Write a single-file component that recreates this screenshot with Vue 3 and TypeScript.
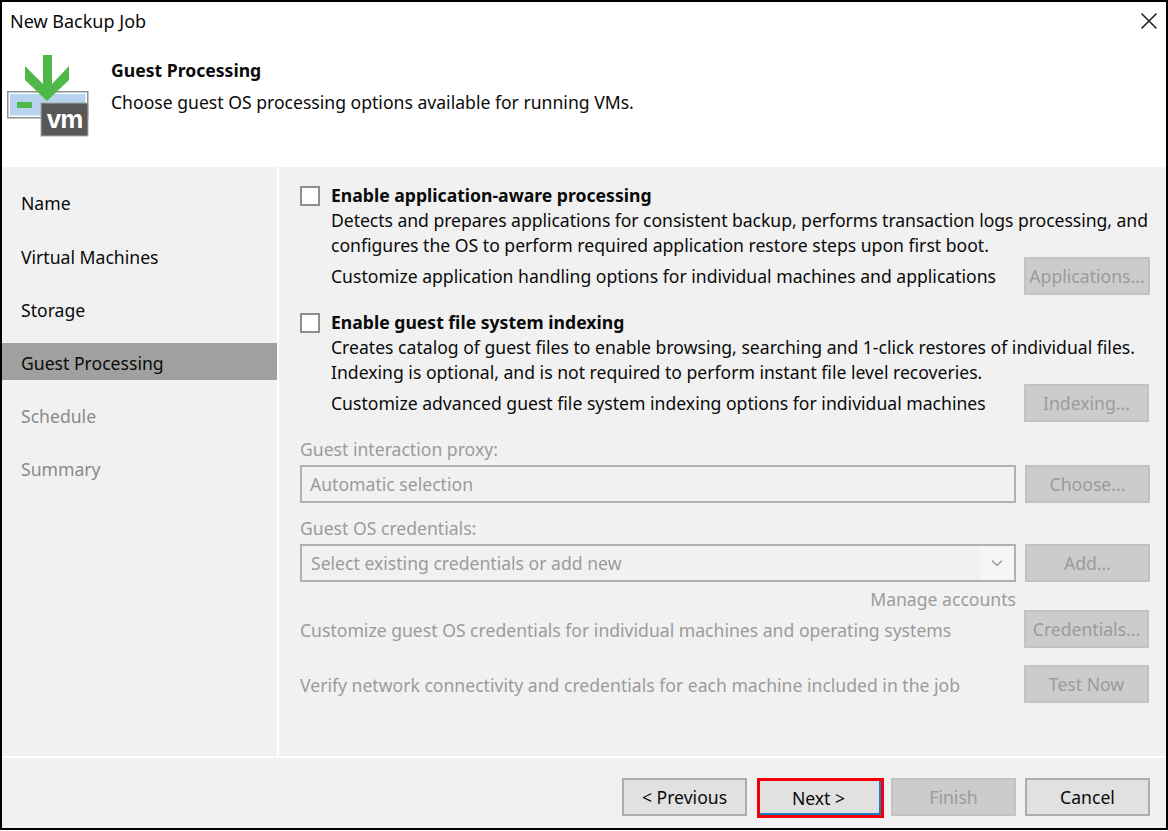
<script setup lang="ts">
const steps = [
  { label: 'Name', state: 'done' },
  { label: 'Virtual Machines', state: 'done' },
  { label: 'Storage', state: 'done' },
  { label: 'Guest Processing', state: 'active' },
  { label: 'Schedule', state: 'todo' },
  { label: 'Summary', state: 'todo' },
]
</script>

<template>
  <div class="win">
    <div class="titlebar">
      <span class="wintitle">New Backup Job</span>
      <svg class="close" width="18" height="18" viewBox="0 0 18 18"><path d="M1.5 1.5 16.5 16.5M16.5 1.5 1.5 16.5" stroke="#222" stroke-width="1.6" fill="none" /></svg>
    </div>
    <header class="head">
      <svg class="logo" width="82" height="82" viewBox="0 0 82 82">
        <rect x="0.75" y="36.75" width="80" height="26" fill="#fff" stroke="#8f8f8f" stroke-width="1.5" />
        <rect x="3" y="39" width="75.5" height="21.5" fill="#b7d3ee" />
        <rect x="10" y="47" width="15" height="6" fill="#4fb848" />
        <polygon points="36,0 45,0 45,29 62,11 62,25 40,46 18,25 18,11 36,29" fill="#4fb848" />
        <rect x="34" y="48" width="47" height="33" fill="#585858" stroke="#a8a8a8" stroke-width="1" />
        <text x="57.5" y="73" text-anchor="middle" class="vm">vm</text>
      </svg>
      <div class="headtext">
        <div class="headtitle">Guest Processing</div>
        <div class="headsub">Choose guest OS processing options available for running VMs.</div>
      </div>
    </header>
    <div class="body">
      <nav class="nav">
        <div v-for="s in steps" :key="s.label" class="step" :class="s.state">{{ s.label }}</div>
      </nav>
      <main class="main">
        <section class="group">
          <div class="checkrow"><span class="check"></span><strong>Enable application-aware processing</strong></div>
          <div class="desc">
            <div class="tight">Detects and prepares applications for consistent backup, performs transaction logs processing, and</div>
            <div>configures the OS to perform required application restore steps upon first boot.</div>
          </div>
          <div class="custom">
            <span>Customize application handling options for individual machines and applications</span>
            <button class="btn off">Applications...</button>
          </div>
        </section>
        <section class="group second">
          <div class="checkrow"><span class="check"></span><strong>Enable guest file system indexing</strong></div>
          <div class="desc">
            <div>Creates catalog of guest files to enable browsing, searching and 1-click restores of individual files.</div>
            <div>Indexing is optional, and is not required to perform instant file level recoveries.</div>
          </div>
          <div class="custom">
            <span>Customize advanced guest file system indexing options for individual machines</span>
            <button class="btn off">Indexing...</button>
          </div>
        </section>
        <section class="disabled">
          <div class="label">Guest interaction proxy:</div>
          <div class="field">
            <div class="input">Automatic selection</div>
            <button class="btn off">Choose...</button>
          </div>
          <div class="label cred">Guest OS credentials:</div>
          <div class="field">
            <div class="input select">
              <span>Select existing credentials or add new</span>
              <span class="arrow">
                <svg width="12" height="8" viewBox="0 0 12 8"><path d="M1 1.5 6 6.5 11 1.5" stroke="#9a9a9a" stroke-width="1.5" fill="none" /></svg>
              </span>
            </div>
            <button class="btn off">Add...</button>
          </div>
          <div class="manage">Manage accounts</div>
          <div class="line first">
            <span>Customize guest OS credentials for individual machines and operating systems</span>
            <button class="btn off">Credentials...</button>
          </div>
          <div class="line">
            <span>Verify network connectivity and credentials for each machine included in the job</span>
            <button class="btn off">Test Now</button>
          </div>
        </section>
      </main>
    </div>
    <footer class="foot">
      <button class="btn prev">&lt; Previous</button>
      <button class="btn next">Next &gt;</button>
      <button class="btn off">Finish</button>
      <button class="btn">Cancel</button>
    </footer>
  </div>
</template>

<style>
html, body { margin: 0; background: #fff; }
</style>

<style scoped>
.win {
  box-sizing: border-box;
  width: 1168px;
  height: 830px;
  border: 2px solid #000;
  background: #fff;
  display: flex;
  flex-direction: column;
  font-family: "Noto Sans", "Open Sans", sans-serif;
  font-size: 17.6px;
  line-height: 25px;
  color: #0a0a0a;
  overflow: hidden;
  white-space: nowrap;
}
.titlebar {
  height: 39px;
  flex: none;
  display: flex;
  align-items: center;
  justify-content: space-between;
  padding: 0 8px 0 8px;
  box-sizing: border-box;
  font-size: 18px;
}
.close { margin-top: -2px; }
.head {
  height: 126px;
  flex: none;
  display: flex;
  padding-left: 5px;
  box-sizing: border-box;
}
.logo { margin-top: 14px; flex: none; }
.vm { font: bold 26px "Liberation Sans", sans-serif; fill: #fff; letter-spacing: -1px; }
.headtext { margin-left: 22px; padding-top: 17px; }
.headtitle { font-weight: 700; }
.headsub { margin-top: 7px; }
.body { flex: 1; display: flex; min-height: 0; background: #f1f1f1; border-bottom: 2px solid #fff; }
.nav {
  width: 275px;
  flex: none;
  border-right: 2px solid #fff;
  padding-top: 16.4px;
  display: flex;
  flex-direction: column;
  gap: 16.2px;
}
.step { height: 37px; line-height: 40px; padding-left: 19px; }
.step.active { background: #a0a0a0; }
.step.todo { color: #8a8a8a; }
.main { flex: 1; padding: 16px 16px 0 21px; min-width: 0; }
.group { display: flex; flex-direction: column; }
.second { margin-top: 15px; }
.checkrow { display: flex; align-items: center; height: 25px; }
.checkrow strong { font-weight: 700; margin-left: 11px; }
.check {
  width: 20px;
  height: 20px;
  box-sizing: border-box;
  background: #fff;
  border: 2px solid #8e8e8e;
}
.desc { margin-left: 31px; }
.tight { letter-spacing: -0.05px; }
.custom {
  margin-left: 31px;
  height: 38px;
  margin-top: -1px;
  display: flex;
  align-items: center;
  justify-content: space-between;
}
.btn {
  width: 125px;
  height: 38px;
  flex: none;
  box-sizing: border-box;
  border: 2px solid #adadad;
  background: #e1e1e1;
  color: #0a0a0a;
  font: inherit;
  padding: 0;
  white-space: nowrap;
  overflow: hidden;
}
.custom .btn { width: 126px; }
.second .custom { padding-right: 1px; }
.second .custom .btn { width: 125px; }
.btn.off { background: #cccccc; border-color: #c2c2c2; color: #9b9b9b; }
.disabled { color: #9b9b9b; margin-top: 15px; }
.label { height: 25px; }
.cred { margin-top: 13px; }
.field { display: flex; justify-content: space-between; height: 38px; margin-top: 3px; }
.input {
  width: 716px;
  box-sizing: border-box;
  border: 2px solid #adb2b6;
  background: #f1f1f1;
  padding-left: 8px;
  line-height: 35px;
}
.select { display: flex; justify-content: space-between; padding-left: 9px; }
.arrow { width: 34px; background: #f6f6f6; display: flex; align-items: center; justify-content: center; }
.manage { text-align: right; width: 716px; height: 28px; line-height: 35px; }
.line { display: flex; align-items: center; justify-content: space-between; height: 38px; padding-right: 1px; }
.line span { padding-top: 2px; }
.line.first { margin-bottom: 17px; }
.foot {
  flex: none;
  height: 70px;
  box-sizing: border-box;
  background: #f1f1f1;
  display: flex;
  justify-content: flex-end;
  align-items: flex-start;
  padding: 20px 16px 0 0;
  gap: 9px;
}
.prev { margin-right: 1px; }
.next { border: 3px solid #f5000a; width: 127px; height: 40px; margin: 0 -2px 0 0; padding-right: 4px; box-shadow: inset -2px -2px 0 #1a7fc0; }
</style>
